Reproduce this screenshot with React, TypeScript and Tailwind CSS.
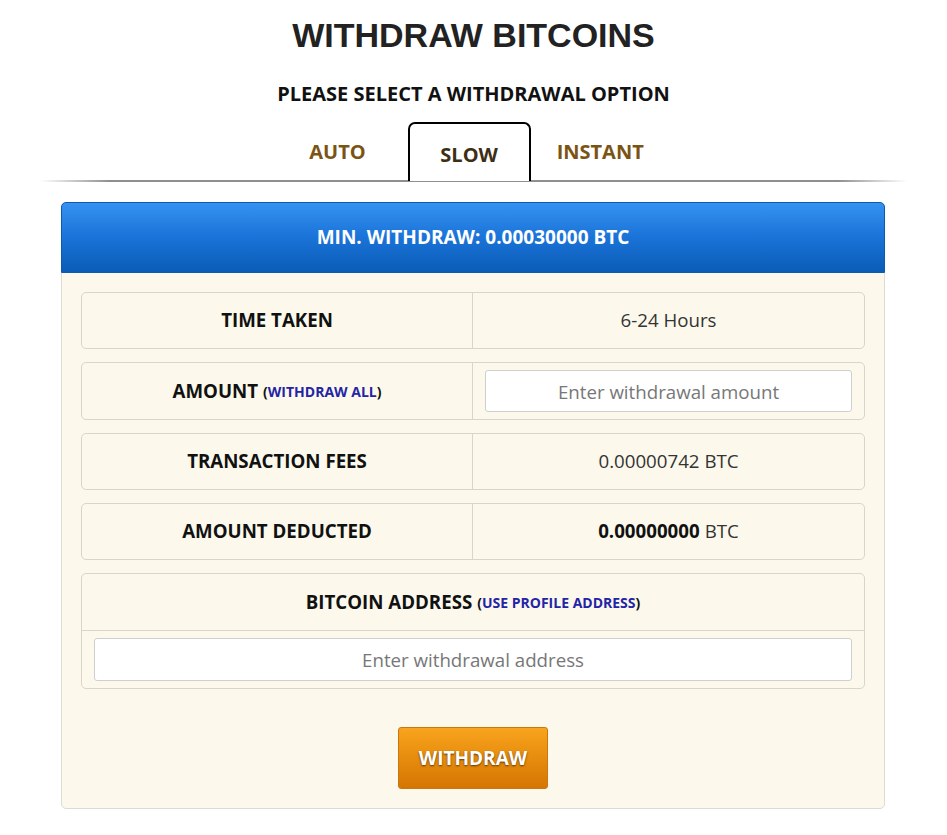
import React from 'react';

const rowBox = 'flex rounded-[5px] border border-[#d9d6c8] bg-[#fcf9ec]';
const labelCell = 'flex w-1/2 items-center justify-center border-r border-[#d9d6c8] text-[18.7px] font-bold text-[#111]';
const valueCell = 'flex w-1/2 items-center justify-center text-[18.7px] text-[#333]';

const Row = ({ label, children, tall }: { label: React.ReactNode; children: React.ReactNode; tall?: boolean }) => (
  <div className={`${rowBox} ${tall ? 'h-[58px]' : 'h-[57px]'}`}>
    <div className={labelCell}>{label}</div>
    <div className={valueCell}>{children}</div>
  </div>
);

const Hint = ({ text }: { text: string }) => (
  <span className="ml-[5px] text-[14px] font-bold text-[#111]">
    (<span className="text-[#2424a6]">{text}</span>)
  </span>
);

export default function App() {
  return (
    <div className="min-h-screen w-full bg-white pt-[15px] font-['Open_Sans',sans-serif]">
      <h1 className="text-center font-['Liberation_Sans',Arial,sans-serif] text-[34px] leading-[40px] font-bold text-[#222]">
        WITHDRAW BITCOINS
      </h1>
      <p className="mt-[26px] text-center text-[20px] leading-[26px] font-bold text-[#111]">
        PLEASE SELECT A WITHDRAWAL OPTION
      </p>

      <div className="relative mt-[15px]">
        <div className="flex items-end justify-center pl-[6px]">
          <button className="mr-[42px] pb-[13px] text-[20px] font-bold text-[#7b5414]">AUTO</button>
          <button className="relative z-10 -mb-px h-[59px] w-[123px] rounded-t-[7px] border-2 border-b-0 border-black bg-white pt-[5px] text-[20px] font-bold text-[#3d2e16]">
            SLOW
          </button>
          <button className="ml-[26px] pb-[13px] text-[20px] font-bold text-[#7b5414]">INSTANT</button>
        </div>
        <div className="mx-[40px] h-[2px] bg-[linear-gradient(to_right,rgba(150,150,150,0),#8f8f8f_8%,#8f8f8f_92%,rgba(150,150,150,0))]" />
      </div>

      <div className="mt-[20px] ml-[61px] w-[824px] rounded-[5px] border border-[#dcdcd6] bg-[#fcf9ec]">
        <div className="-m-px flex h-[71px] items-center justify-center rounded-t-[5px] border border-[#0b5bb0] bg-[linear-gradient(to_bottom,#3592f1,#1a73d8_50%,#0a5cb6)] text-[19px] font-bold text-white">
          MIN. WITHDRAW: 0.00030000 BTC
        </div>

        <div className="flex flex-col gap-[13px] px-[19px] pt-[20px]">
          <Row label="TIME TAKEN">6-24 Hours</Row>
          <Row
            tall
            label={
              <>
                AMOUNT<Hint text="WITHDRAW ALL" />
              </>
            }
          >
            <div className="w-full px-[12px]">
              <input
                placeholder="Enter withdrawal amount"
                className="h-[42px] w-full rounded-[3px] border border-[#cfcfcf] bg-white text-center text-[18.7px] text-[#333] outline-none placeholder:text-[#777]"
              />
            </div>
          </Row>
          <Row label="TRANSACTION FEES">0.00000742 BTC</Row>
          <Row label="AMOUNT DEDUCTED">
            <span className="font-bold text-[#111]">0.00000000</span>
            <span className="ml-[5px]">BTC</span>
          </Row>
          <div className="rounded-[5px] border border-[#d9d6c8] bg-[#fcf9ec]">
            <div className="flex h-[57px] items-center justify-center border-b border-[#d9d6c8] text-[18.7px] font-bold text-[#111]">
              BITCOIN ADDRESS<Hint text="USE PROFILE ADDRESS" />
            </div>
            <div className="px-[12px] pt-[7px] pb-[7px]">
              <input
                placeholder="Enter withdrawal address"
                className="h-[43px] w-full rounded-[3px] border border-[#cfcfcf] bg-white text-center text-[18.7px] text-[#333] outline-none placeholder:text-[#777]"
              />
            </div>
          </div>
        </div>

        <div className="flex justify-center pt-[38px] pb-[19px]">
          <button className="h-[62px] w-[150px] rounded-[3px] border border-[#c9780d] bg-[linear-gradient(to_bottom,#f8a41e,#e58a0c_55%,#d57604)] text-[19px] font-bold text-white [text-shadow:0_1px_2px_rgba(60,30,0,0.8)]">
            WITHDRAW
          </button>
        </div>
      </div>
    </div>
  );
}
